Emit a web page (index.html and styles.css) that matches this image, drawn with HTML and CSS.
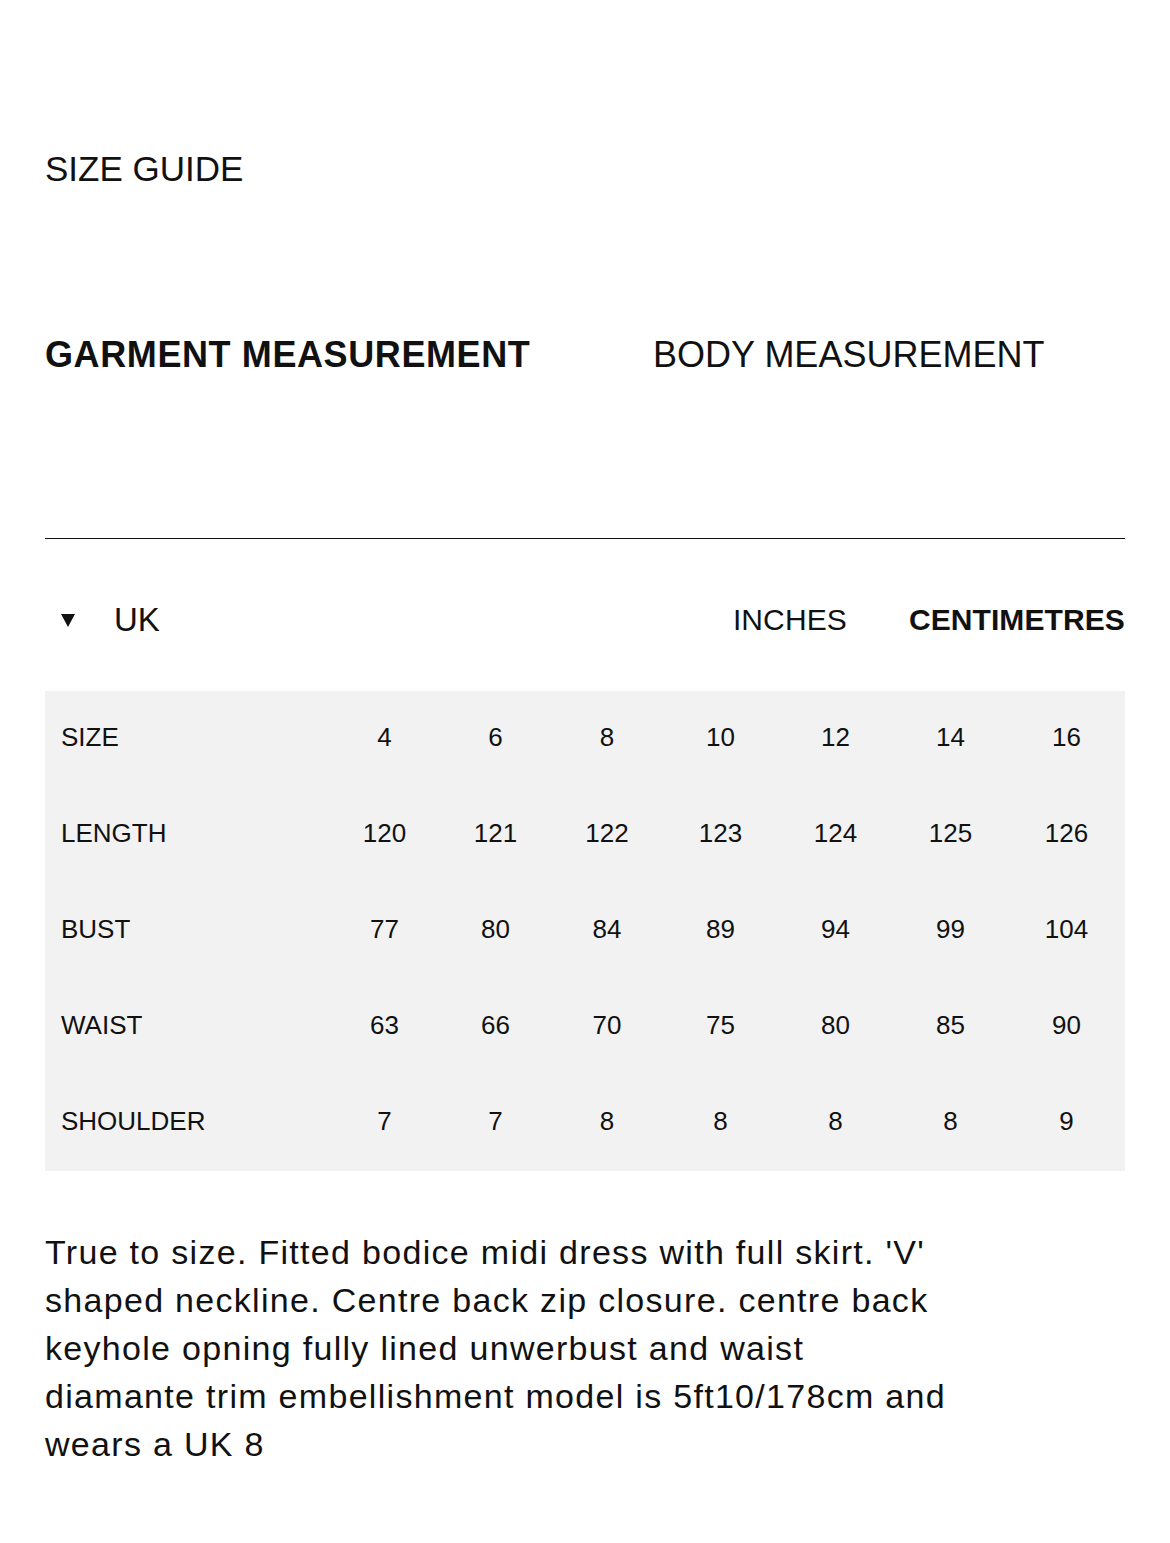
FILE: index.html
```html
<!DOCTYPE html>
<html lang="en">
<head>
<meta charset="utf-8">
<title>Size Guide</title>
<link rel="stylesheet" href="styles.css">
</head>
<body>
<main class="page">
  <h1 class="title">SIZE GUIDE</h1>

  <nav class="tabs">
    <span class="tab tab-active">GARMENT MEASUREMENT</span>
    <span class="tab">BODY MEASUREMENT</span>
  </nav>

  <hr class="rule">

  <div class="controls">
    <div class="region">
      <svg class="caret" viewBox="0 0 14 13" width="14" height="13" aria-hidden="true">
        <polygon points="0,0 14,0 7,13" fill="#111"/>
      </svg>
      <span class="region-label">UK</span>
    </div>
    <div class="units">
      <span class="unit">INCHES</span>
      <span class="unit unit-active">CENTIMETRES</span>
    </div>
  </div>

  <div class="chart">
    <div class="row">
      <span class="label">SIZE</span><span>4</span><span>6</span><span>8</span><span>10</span><span>12</span><span>14</span><span>16</span>
    </div>
    <div class="row">
      <span class="label">LENGTH</span><span>120</span><span>121</span><span>122</span><span>123</span><span>124</span><span>125</span><span>126</span>
    </div>
    <div class="row">
      <span class="label">BUST</span><span>77</span><span>80</span><span>84</span><span>89</span><span>94</span><span>99</span><span>104</span>
    </div>
    <div class="row">
      <span class="label">WAIST</span><span>63</span><span>66</span><span>70</span><span>75</span><span>80</span><span>85</span><span>90</span>
    </div>
    <div class="row">
      <span class="label">SHOULDER</span><span>7</span><span>7</span><span>8</span><span>8</span><span>8</span><span>8</span><span>9</span>
    </div>
  </div>

  <p class="notes">True to size. Fitted bodice midi dress with full skirt. 'V'<br>shaped neckline. Centre back zip closure. centre back<br>keyhole opning fully lined unwerbust and waist<br>diamante trim embellishment model is 5ft10/178cm and<br>wears a UK 8</p>
</main>
</body>
</html>
```

FILE: styles.css
```css
html, body {
  margin: 0;
  padding: 0;
  background: #ffffff;
}

body {
  font-family: "Liberation Sans", Arial, sans-serif;
  color: #111111;
}

.page {
  padding: 149px 45px 60px;
}

.title {
  margin: 0;
  font-size: 35px;
  line-height: 40px;
  font-weight: 400;
}

.tabs {
  margin-top: 146px;
  display: grid;
  grid-template-columns: 608px auto;
  font-size: 36px;
  line-height: 40px;
}

.tab {
  font-weight: 400;
  white-space: nowrap;
}

.tab-active {
  font-weight: 700;
  letter-spacing: 0.6px;
}

.rule {
  margin: 163px 0 0;
  border: 0;
  border-top: 1.5px solid #111111;
  height: 0;
}

.controls {
  margin-top: 61px;
  height: 40px;
  display: flex;
  align-items: center;
  justify-content: space-between;
}

.region {
  display: flex;
  align-items: center;
}

.caret {
  margin-left: 16px;
  display: block;
}

.region-label {
  margin-left: 39px;
  font-size: 33px;
  line-height: 40px;
}

.units {
  display: flex;
  align-items: center;
  gap: 62px;
  font-size: 30px;
  line-height: 40px;
}

.unit {
  letter-spacing: 0.1px;
}

.unit-active {
  font-weight: 700;
}

.chart {
  margin-top: 51px;
  background: #f2f2f2;
}

.row {
  box-sizing: border-box;
  display: grid;
  grid-template-columns: 284px 111px 111px 112px 115px 115px 115px 117px;
  height: 96px;
  padding-bottom: 4px;
  align-items: center;
  font-size: 26px;
}

.row span {
  text-align: center;
}

.row .label {
  text-align: left;
  padding-left: 16px;
}

.notes {
  margin: 57px 0 0;
  font-size: 34px;
  line-height: 48px;
  letter-spacing: 1.3px;
}
```
